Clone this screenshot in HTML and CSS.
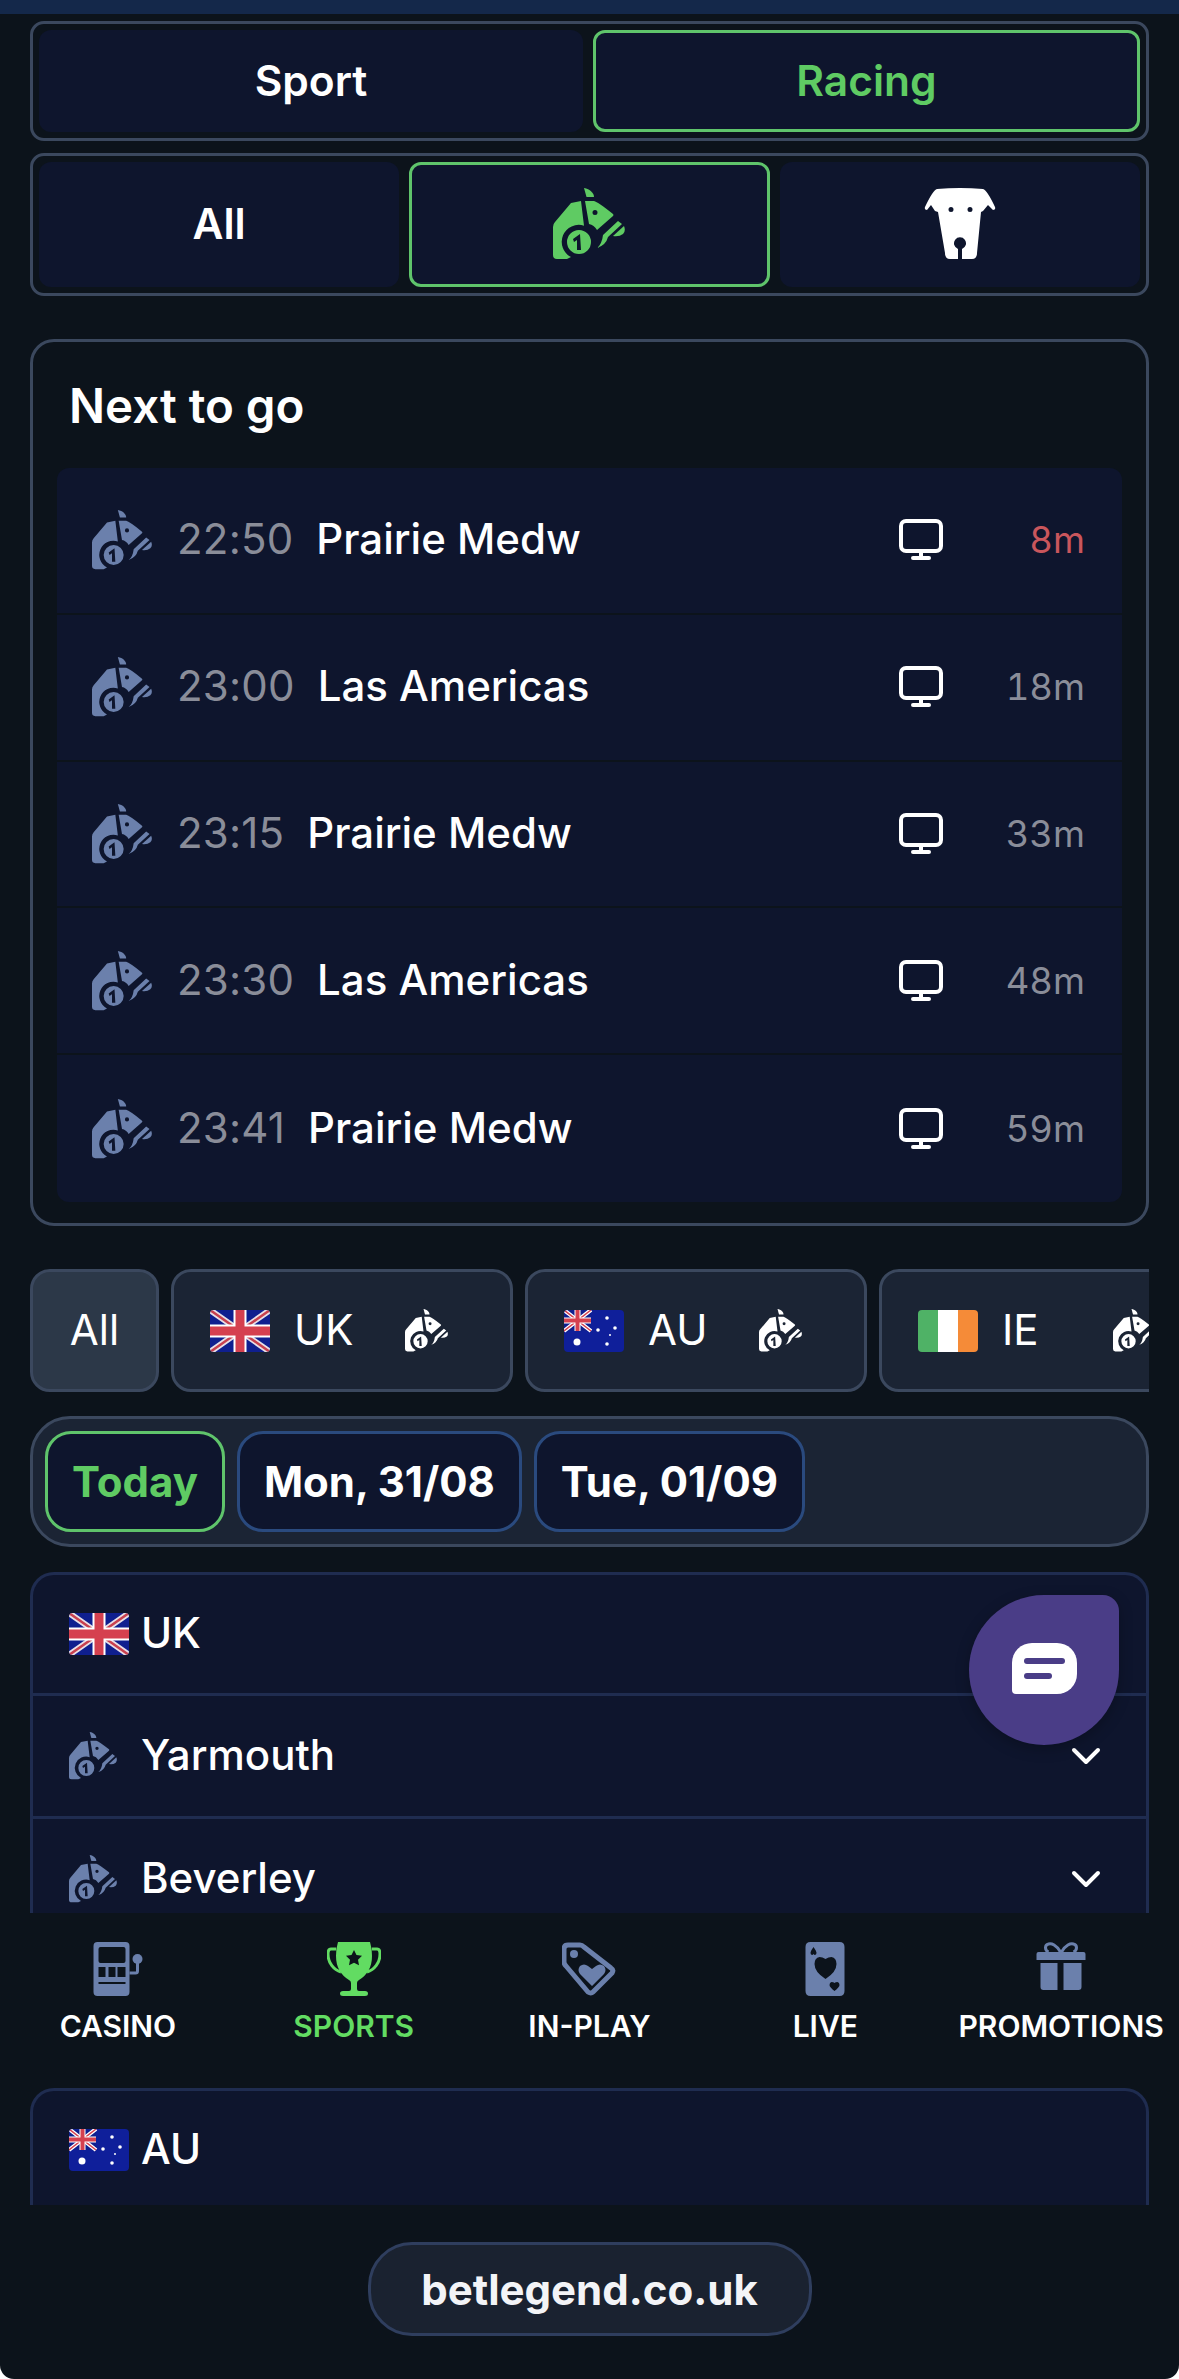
FILE: index.html
```html
<!DOCTYPE html>
<html lang="en">
<head>
    <meta charset="UTF-8">
    <meta name="viewport" content="width=device-width, initial-scale=1.0">
    <title>Bet Legend - Racing</title>
    <link rel="stylesheet" href="styles.css">
</head>
<body>
    <svg class="sprites" xmlns="http://www.w3.org/2000/svg">
        <symbol id="horse" viewBox="0 0 72 72">
            <path d="M31 0c6 1 10 5 10 9h-7.500z"/>
            <path d="M28 13 18 15 2 34q-2 2-2 5v28q0 4 4 4h10l4-2A17 17 0 0 1 31 37.700z"/>
            <path fill-rule="evenodd" d="M32 13h9q4 1 19 13 1 1 0 2L44 42q-3-5-8-6zm10 9a2.400 2.400 0 1 0 0 5 2.400 2.400 0 0 0 0-5z"/>
            <path fill-rule="evenodd" d="M26 42a12 12 0 1 0 0 24 12 12 0 0 0 0-24zm1 4-7 5 1 3 3-2 0 10h4z"/>
            <path d="M44 60q5-4 6-13l15-14 4 3-14 13q-2 8-11 11z"/>
            <path d="M60 48 71 38q2 5-1 8-4 3-10 2z"/>
        </symbol>
        <symbol id="dog" viewBox="0 0 72 72">
            <path fill-rule="evenodd" d="M13 1Q36-1 59 1q4 1 12 18 1 3-2 3-4-4-5-5l-5 6-2 1-4 41q0 6-5 6H38V61a6 6 0 1 0-4 0v10H26q-5 0-5-6L14 24l-3-1-4-6-4 5q-3 0-2-3Q9 2 13 1zm14 18a2.400 2.400 0 1 0 0 5 2.400 2.400 0 0 0 0-5zm19 0a2.400 2.400 0 1 0 0 5 2.400 2.400 0 0 0 0-5z"/>
        </symbol>
        <symbol id="monitor" viewBox="0 0 44 42">
            <rect x="2" y="2" width="40" height="30" rx="5" fill="none" stroke="currentColor" stroke-width="4"/>
            <path d="M22 32v7M14 39h16" fill="none" stroke="currentColor" stroke-width="4" stroke-linecap="round"/>
        </symbol>
        <symbol id="chevron" viewBox="0 0 30 20">
            <path d="M3 4l12 12L27 4" fill="none" stroke="currentColor" stroke-width="4" stroke-linecap="round" stroke-linejoin="round"/>
        </symbol>
        <symbol id="flag-uk" viewBox="0 0 60 42">
            <rect width="60" height="42" fill="#0f1f8f"/>
            <path d="M0 0l60 42M60 0L0 42" stroke="#e8dfe6" stroke-width="6"/>
            <path d="M0 0l60 42M60 0L0 42" stroke="#c8404f" stroke-width="2.500"/>
            <path d="M30 0v42M0 21h60" stroke="#fff" stroke-width="13"/>
            <path d="M30 0v42M0 21h60" stroke="#d5404f" stroke-width="9"/>
        </symbol>
        <symbol id="flag-au" viewBox="0 0 60 42">
            <rect width="60" height="42" fill="#0f1f9a"/>
            <g>
                <rect width="27" height="21" fill="#0f1f8f"/>
                <path d="M0 0l27 21M27 0L0 21" stroke="#fff" stroke-width="4"/>
                <path d="M0 0l27 21M27 0L0 21" stroke="#d5404f" stroke-width="1.500"/>
                <path d="M13.500 0v21M0 10.500h27" stroke="#fff" stroke-width="6"/>
                <path d="M13.500 0v21M0 10.500h27" stroke="#d5404f" stroke-width="4"/>
            </g>
            <g fill="#fff">
                <circle cx="13" cy="32" r="3.500"/>
                <circle cx="43" cy="8" r="1.800"/>
                <circle cx="51" cy="18" r="1.800"/>
                <circle cx="34" cy="20" r="1.800"/>
                <circle cx="43" cy="34" r="1.800"/>
                <circle cx="46" cy="25" r="1"/>
            </g>
        </symbol>
        <symbol id="flag-ie" viewBox="0 0 60 42">
            <rect width="20" height="42" fill="#4fb266"/>
            <rect x="20" width="20" height="42" fill="#fff"/>
            <rect x="40" width="20" height="42" fill="#f58b38"/>
        </symbol>
    </svg>

    <div class="page">
        <div class="top-bar"></div>

        <div class="content">
            <div class="switch switch-main">
                <button class="switch-btn">Sport</button>
                <button class="switch-btn active">Racing</button>
            </div>
            <div class="switch switch-type">
                <button class="switch-btn">All</button>
                <button class="switch-btn active"><svg class="type-icon"><use href="#horse"/></svg></button>
                <button class="switch-btn"><svg class="type-icon"><use href="#dog"/></svg></button>
            </div>

            <div class="next-panel">
                <div class="next-title">Next to go</div>
                <div class="race-list">
                    <div class="race-row">
                        <svg class="race-icon"><use href="#horse"/></svg>
                        <span class="race-time">22:50</span>
                        <span class="race-name">Prairie Medw</span>
                        <svg class="race-tv"><use href="#monitor"/></svg>
                        <span class="race-mins soon">8m</span>
                    </div>
                    <div class="race-row">
                        <svg class="race-icon"><use href="#horse"/></svg>
                        <span class="race-time">23:00</span>
                        <span class="race-name">Las Americas</span>
                        <svg class="race-tv"><use href="#monitor"/></svg>
                        <span class="race-mins">18m</span>
                    </div>
                    <div class="race-row">
                        <svg class="race-icon"><use href="#horse"/></svg>
                        <span class="race-time">23:15</span>
                        <span class="race-name">Prairie Medw</span>
                        <svg class="race-tv"><use href="#monitor"/></svg>
                        <span class="race-mins">33m</span>
                    </div>
                    <div class="race-row">
                        <svg class="race-icon"><use href="#horse"/></svg>
                        <span class="race-time">23:30</span>
                        <span class="race-name">Las Americas</span>
                        <svg class="race-tv"><use href="#monitor"/></svg>
                        <span class="race-mins">48m</span>
                    </div>
                    <div class="race-row">
                        <svg class="race-icon"><use href="#horse"/></svg>
                        <span class="race-time">23:41</span>
                        <span class="race-name">Prairie Medw</span>
                        <svg class="race-tv"><use href="#monitor"/></svg>
                        <span class="race-mins">59m</span>
                    </div>
                </div>
            </div>

            <div class="country-tabs">
                <div class="country-tab all">All</div>
                <div class="country-tab">
                    <svg class="flag"><use href="#flag-uk"/></svg>
                    <span class="country-code">UK</span>
                    <svg class="tab-horse"><use href="#horse"/></svg>
                </div>
                <div class="country-tab">
                    <svg class="flag"><use href="#flag-au"/></svg>
                    <span class="country-code">AU</span>
                    <svg class="tab-horse"><use href="#horse"/></svg>
                </div>
                <div class="country-tab">
                    <svg class="flag"><use href="#flag-ie"/></svg>
                    <span class="country-code">IE</span>
                    <svg class="tab-horse"><use href="#horse"/></svg>
                </div>
            </div>

            <div class="date-tabs">
                <button class="date-btn active">Today</button>
                <button class="date-btn">Mon, 31/08</button>
                <button class="date-btn">Tue, 01/09</button>
            </div>

            <div class="meetings">
                <div class="meeting-head">
                    <svg class="flag"><use href="#flag-uk"/></svg>
                    <span>UK</span>
                </div>
                <div class="meeting-row">
                    <svg class="meeting-icon"><use href="#horse"/></svg>
                    <span class="meeting-name">Yarmouth</span>
                    <svg class="chevron"><use href="#chevron"/></svg>
                </div>
                <div class="meeting-row">
                    <svg class="meeting-icon"><use href="#horse"/></svg>
                    <span class="meeting-name">Beverley</span>
                    <svg class="chevron"><use href="#chevron"/></svg>
                </div>
            </div>
        </div>

        <div class="bottom-nav">
            <div class="nav-item">
                <svg class="nav-icon" viewBox="0 0 49 54">
                    <path fill-rule="evenodd" d="M4 0h28q4 0 4 4v46q0 4-4 4H4q-4 0-4-4V4q0-4 4-4zm3 5q-2 0-2 2v12q0 2 2 2h23q2 0 2-2V7q0-2-2-2zM5 25v10h7V25zm10 0v10h7V25zm9 0v10h8V25zM5 40v2h27v-2z"/>
                    <circle cx="44" cy="17" r="5"/>
                    <path d="M44 20v9q0 2-2 2h-6" fill="none" stroke="currentColor" stroke-width="3"/>
                </svg>
                <span class="nav-label">CASINO</span>
            </div>
            <div class="nav-item active">
                <svg class="nav-icon" viewBox="0 0 54 54">
                    <path fill-rule="evenodd" d="M11 0h32q2 6 2 14 0 16-13 24-2 1-2 3v6q0 2 2 2h6q3 0 3 2.500T38 54H16q-3 0-3-2.500t3-2.500h6q2 0 2-2v-6q0-2-2-3Q9 30 9 14q0-8 2-14zm16 8-2.500 5-5.500.800 4 4-1 5.500 5-2.600 5 2.600-1-5.500 4-4-5.500-.800z"/>
                    <path d="M9 7H4Q1 7 1 12c0 9 6 16 13 18M45 7h5q3 0 3 5c0 9-6 16-13 18" fill="none" stroke="currentColor" stroke-width="3"/>
                </svg>
                <span class="nav-label">SPORTS</span>
            </div>
            <div class="nav-item">
                <svg class="nav-icon" viewBox="0 0 54 54">
                    <path d="M6 3h12q2 0 4 2l27 21q3 2 1 5L31 50q-2 2-5 0L4 24q-2-2-2-4V7q0-4 4-4z" fill="none" stroke="currentColor" stroke-width="5" stroke-linejoin="round"/>
                    <circle cx="12" cy="12" r="4"/>
                    <path d="M30 44 18 32q-3-4 0-8 4-3 8 0l4 3 4-3q4-3 8 0 3 4 0 8z"/>
                </svg>
                <span class="nav-label">IN-PLAY</span>
            </div>
            <div class="nav-item">
                <svg class="nav-icon" viewBox="0 0 39 54">
                    <path fill-rule="evenodd" d="M5 0h29q5 0 5 5v44q0 5-5 5H5q-5 0-5-5V5q0-5 5-5zm3 5Q5 9 5 11q0 2 2 2l1-1 1 1q2 0 2-2 0-2-3-6zm12 12q-3-2-6-2-5 1-5 7 0 8 11 15 11-7 11-15 0-6-5-7-3 0-6 2zm9 24q-1-1-3-1-2 .500-2 3 0 2 5 6 5-4 5-6 0-2.500-2-3-2 0-3 1z"/>
                </svg>
                <span class="nav-label">LIVE</span>
            </div>
            <div class="nav-item">
                <svg class="nav-icon" viewBox="0 0 49 54">
                    <path d="M2 10h45q2 0 2 2v6H0v-6q0-2 2-2zM4 21h17v27H7q-3 0-3-3zM27 21h18v24q0 3-3 3H27z"/>
                    <path d="M24 10C20 3 15 1 12 2 8 3 8 8 12 10M25 10c4-7 9-9 12-8 4 1 4 6 0 8" fill="none" stroke="currentColor" stroke-width="3"/>
                </svg>
                <span class="nav-label">PROMOTIONS</span>
            </div>
        </div>

        <div class="content-lower">
            <div class="meetings meetings-au">
                <div class="meeting-head">
                    <svg class="flag"><use href="#flag-au"/></svg>
                    <span>AU</span>
                </div>
            </div>
        </div>

        <div class="site-bar">
            <div class="site-pill">betlegend.co.uk</div>
        </div>

        <div class="chat-btn">
            <div class="chat-icon">
                <span class="chat-line"></span>
                <span class="chat-line short"></span>
            </div>
        </div>
    </div>
</body>
</html>
```

FILE: styles.css
```css
* {
    margin: 0;
    padding: 0;
    box-sizing: border-box;
}

body {
    font-family: Inter, 'Noto Sans', sans-serif;
    background: white;
    color: white;
    width: 1179px;
    height: 2379px;
    overflow: hidden;
}

button {
    font-family: inherit;
    color: inherit;
}

.sprites {
    display: none;
}

.page {
    position: relative;
    height: 2379px;
    background: #0c131b;
    border-radius: 0 0 14px 14px;
    overflow: hidden;
}

.top-bar {
    height: 14px;
    background: #14284a;
}

.content {
    height: 1899px;
    padding: 7px 30px 0;
    overflow: hidden;
}

/* Sport / Racing switches */
.switch {
    display: flex;
    gap: 10px;
    padding: 6px;
    border: 3px solid #3b485e;
    border-radius: 14px;
}

.switch-main {
    height: 120px;
    margin-bottom: 12px;
}

.switch-main .switch-btn.active {
    flex: 0 0 547px;
}

.switch-type {
    height: 143px;
    margin-bottom: 43px;
}

.switch-btn {
    flex: 1;
    display: flex;
    align-items: center;
    justify-content: center;
    padding-bottom: 2px;
    background: #0e152d;
    border: 3px solid transparent;
    border-radius: 12px;
    font-size: 42.5px;
    font-weight: 600;
}

.switch-btn.active {
    border-color: #5fc46b;
    color: #5fcb63;
}

.type-icon {
    width: 72px;
    height: 72px;
    fill: currentColor;
}

/* Next to go */
.next-panel {
    height: 887px;
    padding: 0 24px;
    border: 3px solid #3b485e;
    border-radius: 24px;
    margin-bottom: 43px;
}

.next-title {
    height: 126px;
    padding: 0 12px;
    display: flex;
    align-items: center;
    font-size: 47.500px;
    font-weight: 600;
}

.race-list {
    border-radius: 12px;
    overflow: hidden;
}

.race-row {
    height: 146.800px;
    padding: 0 37px 0 35px;
    display: flex;
    align-items: center;
    background: #0e152d;
    border-bottom: 2px solid #0c131b;
}

.race-row:last-child {
    border-bottom: none;
}

.race-icon {
    width: 60px;
    height: 60px;
    fill: #6b80ac;
    margin-right: 25px;
}

.race-time {
    font-size: 42px;
    letter-spacing: 0.2px;
    color: #8a8d99;
    margin-right: 23px;
    padding-bottom: 3px;
}

.race-name {
    flex: 1;
    font-size: 42px;
    font-weight: 500;
    padding-bottom: 3px;
}

.race-tv {
    width: 44px;
    height: 42px;
    color: white;
}

.race-mins {
    width: 142px;
    text-align: right;
    font-size: 36.500px;
    font-variant-numeric: tabular-nums;
    color: #8a8d99;
}

.race-mins.soon {
    color: #c9565c;
}

/* Country tabs */
.country-tabs {
    display: flex;
    gap: 12px;
    height: 123px;
    margin-bottom: 24px;
    overflow: hidden;
}

.country-tab {
    flex: none;
    width: 342px;
    padding: 0 36px;
    display: flex;
    align-items: center;
    background: #1b2434;
    border: 3px solid #3b485e;
    border-radius: 20px;
    font-size: 42px;
}

.country-tab.all {
    width: 129px;
    padding: 0 0 2px;
    justify-content: center;
    background: #2c3848;
}

.flag {
    flex: none;
    width: 60px;
    height: 42px;
    border-radius: 4px;
}

.country-code {
    width: 111px;
    margin-left: 24px;
    padding-bottom: 2px;
}

.tab-horse {
    flex: none;
    width: 43px;
    height: 43px;
    fill: white;
}

/* Date tabs */
.date-tabs {
    display: flex;
    gap: 12px;
    height: 131px;
    padding: 12px 13px 12px 12px;
    margin-bottom: 25px;
    background: #1b2434;
    border: 3px solid #3b485e;
    border-radius: 40px;
}

.date-btn {
    padding: 0 24px;
    background: #0e152d;
    border: 3px solid #2a4a7e;
    border-radius: 26px;
    font-size: 42px;
    font-weight: 700;
}

.date-btn.active {
    border-color: #5fc46b;
    color: #5fcb63;
}

/* Meetings accordion */
.meetings {
    background: #0e152d;
    border: 3px solid #1f2c50;
    border-bottom: none;
    border-radius: 24px 24px 0 0;
}

.meeting-head {
    height: 118px;
    padding: 0 36px;
    display: flex;
    align-items: center;
    gap: 12px;
    font-size: 42px;
    font-weight: 500;
}

.meeting-head span {
    padding-bottom: 3px;
}

.meeting-row {
    height: 123px;
    padding: 0 45px 0 36px;
    display: flex;
    align-items: center;
    gap: 24px;
    border-top: 3px solid #1f2c50;
}

.meeting-icon {
    flex: none;
    width: 48px;
    height: 48px;
    fill: #6b80ac;
}

.meeting-name {
    flex: 1;
    font-size: 42px;
    font-weight: 500;
    padding-bottom: 3px;
}

.chevron {
    width: 30px;
    height: 20px;
    color: white;
}

/* Bottom nav */
.bottom-nav {
    display: grid;
    grid-template-columns: repeat(5, 1fr);
    height: 175px;
    padding-top: 29px;
}

.nav-item {
    display: flex;
    flex-direction: column;
    align-items: center;
    color: #6b80ac;
}

.nav-icon {
    width: 54px;
    height: 54px;
    fill: currentColor;
}

.nav-label {
    margin-top: 12px;
    font-size: 30px;
    font-weight: 600;
    color: white;
    white-space: nowrap;
}

.nav-item.active {
    color: #62dc62;
}

.nav-item.active .nav-label {
    color: #62dc62;
}

.content-lower {
    height: 117px;
    padding: 0 30px;
    overflow: hidden;
}

.meetings-au {
    height: 117px;
}

/* Site address */
.site-bar {
    display: flex;
    justify-content: center;
    padding-top: 37px;
}

.site-pill {
    height: 94px;
    width: 444px;
    display: flex;
    align-items: center;
    justify-content: center;
    background: #1a2230;
    border: 3px solid #2f3e5e;
    border-radius: 44px;
    font-size: 42px;
    font-weight: 700;
    color: #f3f4f7;
}

/* Chat launcher */
.chat-btn {
    position: absolute;
    left: 969px;
    top: 1595px;
    width: 150px;
    height: 150px;
    display: flex;
    align-items: center;
    justify-content: center;
    background: #4a3d87;
    border-radius: 75px 16px 75px 75px;
    box-shadow: 0 4px 14px rgba(0, 0, 0, 0.25);
}

.chat-icon {
    width: 65px;
    height: 51px;
    margin-bottom: 3px;
    padding: 15px 12px 0;
    background: white;
    border-radius: 20px 20px 20px 4px;
}

.chat-line {
    display: block;
    width: 41px;
    height: 6px;
    margin-bottom: 9px;
    background: #4a3d87;
    border-radius: 3px;
}

.chat-line.short {
    width: 28px;
}
```
